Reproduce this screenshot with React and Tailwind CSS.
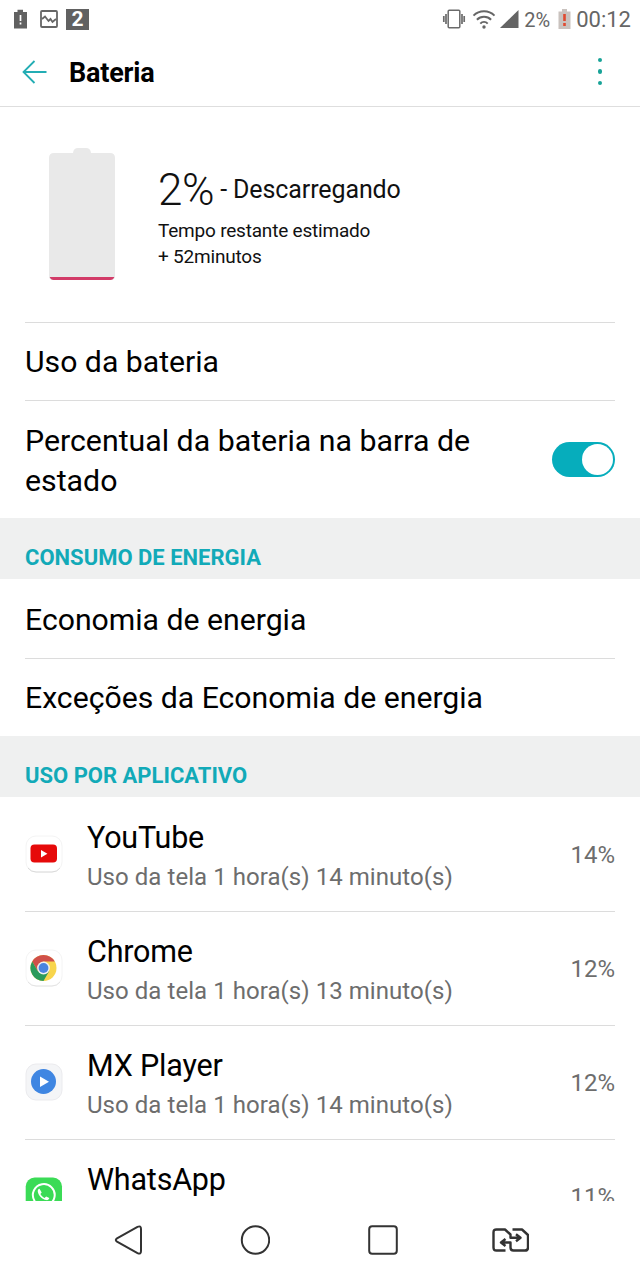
const APPS = [
  { name: "YouTube", usage: "Uso da tela 1 hora(s) 14 minuto(s)", percent: "14%", Icon: YouTubeIcon },
  { name: "Chrome", usage: "Uso da tela 1 hora(s) 13 minuto(s)", percent: "12%", Icon: ChromeIcon },
  { name: "MX Player", usage: "Uso da tela 1 hora(s) 14 minuto(s)", percent: "12%", Icon: MxPlayerIcon },
  { name: "WhatsApp", usage: "", percent: "11%", Icon: WhatsAppIcon },
];

function YouTubeIcon() {
  return (
    <svg viewBox="0 0 38 38" className="-mt-[2px] size-[38px]">
      <rect x="1" y="1" width="36" height="36" rx="10" fill="#fff" stroke="#f4f4f4" />
      <path d="M3 33q3 4 8 4h16q5 0 8-4" fill="none" stroke="#dadada" />
      <rect x="5.5" y="9.5" width="26.5" height="18" rx="4" fill="#e60a0a" />
      <path d="M16 15v7.4l6.4-3.7z" fill="#fff" />
    </svg>
  );
}

function ChromeIcon() {
  return (
    <svg viewBox="0 0 38 38" className="-mt-[2px] size-[38px]">
      <rect x="1" y="1" width="36" height="36" rx="10" fill="#fff" stroke="#f4f4f4" />
      <path d="M3 33q3 4 8 4h16q5 0 8-4" fill="none" stroke="#e4e4e4" />
      <g transform="translate(18.5 19)">
        <circle r="13" fill="#f8d54c" />
        <path d="M-11.26-6.5A13 13 0 0 1 11.26-6.5H0L-5.6 3.2z" fill="#d0504a" />
        <path d="M-11.26-6.5A13 13 0 0 0 0 13L5.6 3.2H-5.6z" fill="#2a9a5b" />
        <circle r="6.4" fill="#f1f1f1" />
        <circle r="4.9" fill="#4a84e0" />
      </g>
    </svg>
  );
}

function MxPlayerIcon() {
  return (
    <svg viewBox="0 0 38 38" className="-mt-[2px] size-[38px]">
      <rect x="1" y="1" width="36" height="36" rx="10" fill="#f4f5f7" stroke="#ebebee" />
      <circle cx="18.5" cy="18.5" r="12.5" fill="#3f86e2" />
      <path d="M15 13.5v10.4l9-5.2z" fill="#fff" />
    </svg>
  );
}

function WhatsAppIcon() {
  return (
    <svg viewBox="0 0 38 38" className="-mt-[2px] size-[38px]">
      <rect x=".7" y=".5" width="36.3" height="36.5" rx="9" fill="#3bdb56" />
      <path d="M7.5 29.2l1.900-5.700A10.900 10.900 0 1 1 13 27.200z" fill="none" stroke="#fff" strokeWidth="2" />
      <path
        d="M14.500 11.700c-1.200.2-2 1.500-1.700 3 .8 4 4.400 7.600 8.500 8.400 1.500.2 2.900-.7 3-2l-3.200-1.700-1.500 1.500c-1.900-.8-3.300-2.100-4.200-3.900l1.300-1.500z"
        fill="#fff"
      />
    </svg>
  );
}

function StatusBar() {
  return (
    <div className="flex h-10 items-center justify-between pr-[9px] pl-[13px] text-[#666]">
      <div className="flex items-center">
        <svg viewBox="0 0 15 20" className="-mt-[3px] h-5 w-[15px]">
          <path d="M1 3h3.500V.8h5.500V3H14v16.500H1z" fill="#616161" />
          <path d="M7.500 6v6M7.500 13.500v2" stroke="#fff" strokeWidth="1.700" />
        </svg>
        <svg viewBox="0 0 18 18" className="-mt-[3px] ml-3 size-[18px]">
          <rect x="1" y="1" width="16" height="16" rx="1" fill="none" stroke="#666" strokeWidth="1.800" />
          <path d="M2 9l3-2.500 3.500 4.500 2-2 2 3L16 9" fill="none" stroke="#666" strokeWidth="1.800" />
        </svg>
        <div className="-mt-[2px] ml-2 flex h-[21px] w-[23px] items-center justify-center bg-[#616161] text-[21px] leading-none font-bold text-white">
          2
        </div>
      </div>
      <div className="flex items-center">
        <svg viewBox="0 0 24 20" className="-mt-[2px] h-5 w-6" fill="none" stroke="#6b6b6b" strokeWidth="1.500">
          <rect x="6.200" y="1.200" width="11.600" height="17.600" rx="1" />
          <path d="M4 5v10M1.800 7v6M20 5v10M22.200 7v6" strokeWidth="1.700" />
        </svg>
        <svg viewBox="0 0 24 20" className="-mt-[2px] ml-[6px] h-5 w-6" fill="none" stroke="#666" strokeWidth="2">
          <path d="M1.500 6.600a15 15 0 0 1 21 0M4.900 10.700a10 10 0 0 1 14.200 0M8.300 14.600a5.300 5.300 0 0 1 7.400 0" />
          <circle cx="12" cy="18" r="1.700" fill="#666" stroke="none" />
        </svg>
        <svg viewBox="0 0 19 18" className="-mt-[2px] ml-1 h-[18px] w-[19px]">
          <path d="M0 18L18.500 0v18z" fill="#646464" />
        </svg>
        <span className="ml-[5px] text-[20px] leading-none">2%</span>
        <svg viewBox="0 0 13 20" className="-mt-[2px] ml-2 h-5 w-[13px]">
          <path d="M.5 2.500H4V0h5v2.500h3.500V20H.5z" fill="#c9c2be" />
          <path d="M6.500 5v7M6.500 14v3" stroke="#e04a30" strokeWidth="2.600" />
        </svg>
        <span className="-mt-px ml-[5px] text-[22px] leading-none">00:12</span>
      </div>
    </div>
  );
}

function Header() {
  return (
    <header className="flex h-[67px] items-center border-b border-[#dedede] pb-[3px] pl-[22px]">
      <svg viewBox="0 0 26 24" className="h-6 w-[26px]" fill="none" stroke="#23adb4" strokeWidth="1.800">
        <path d="M12.500 1L1.500 12l11 11M1.500 12H24.500" />
      </svg>
      <h1 className="ml-[21px] flex-1 pt-[3px] text-[27px] leading-none font-bold tracking-[-0.2px] text-black">
        Bateria
      </h1>
      <div className="mr-[38px] flex flex-col gap-[7px]">
        <span className="size-[4.5px] rounded-full bg-[#18a398]" />
        <span className="size-[4.5px] rounded-full bg-[#18a398]" />
        <span className="size-[4.5px] rounded-full bg-[#18a398]" />
      </div>
    </header>
  );
}

function BatterySummary() {
  return (
    <section className="mx-[25px] flex h-[216px] border-b border-[#dcdcdc] pl-6">
      <svg viewBox="0 0 66 134" className="mt-[40px] h-[134px] w-[66px]">
        <path d="M24 6Q24.500 1 29 1h8q4.500 0 5 5h19q5 0 5 5v118q0 4-4 4H4q-4 0-4-4V11q0-5 5-5z" fill="#e9e9e9" />
        <path d="M.7 130h64.600q-1 3-4 3H4.700q-3 0-4-3z" fill="#d23b68" />
      </svg>
      <div className="ml-[43px] pt-[58px] text-[#111]">
        <div className="flex items-center leading-[50px]">
          <span className="text-[44px] font-light tracking-[-0.4px]">2%</span>
          <span className="ml-[6px] text-[25px] tracking-[-0.1px]">- Descarregando</span>
        </div>
        <p className="mt-[3px] text-[19px] leading-[26px] tracking-[-0.2px]">
          Tempo restante estimado
          <br />+ 52minutos
        </p>
      </div>
    </section>
  );
}

function SectionTitle({ children }) {
  return (
    <h2 className="flex h-[61px] items-end bg-[#eff0f0] px-[25px] pb-[7px] text-[22px] leading-[28px] font-bold text-[#12aab8]">
      {children}
    </h2>
  );
}

function Toggle() {
  return (
    <button className="-mt-[3px] flex h-[35px] w-[63px] items-center justify-end rounded-full bg-[#06adbc] pr-[2px]">
      <span className="size-[31px] rounded-full bg-white" />
    </button>
  );
}

function AppRow({ app }) {
  const { name, usage, percent, Icon } = app;
  return (
    <li className="mx-[25px] flex h-[114px] items-center border-b border-[#dcdcdc]">
      <Icon />
      <div className="ml-6 h-full flex-1 pt-5">
        <div className="text-[30.5px] leading-[40px] tracking-[-0.2px] text-black">{name}</div>
        <div className="text-[24px] leading-[38px] tracking-[0.05px] text-[#6d6d6d]">{usage}</div>
      </div>
      <span className="text-[24px] text-[#6d6d6d]">{percent}</span>
    </li>
  );
}

function NavBar() {
  return (
    <nav className="flex h-[79px] items-center bg-white pb-px pl-[114px]">
      <svg viewBox="0 0 28 30" className="h-[30px] w-7" fill="none" stroke="#333" strokeWidth="2">
        <path d="M23.500 1.900Q27 .2 27 4v22q0 3.800-3.500 2.100L3 16.600q-2.400-1.600 0-3.200z" />
      </svg>
      <svg viewBox="0 0 30 30" className="ml-[98px] size-[30px]" fill="none" stroke="#333" strokeWidth="2">
        <circle cx="15.5" cy="15" r="13.7" />
      </svg>
      <svg viewBox="0 0 30 30" className="ml-[98px] size-[30px]" fill="none" stroke="#333" strokeWidth="2">
        <rect x="1.2" y="1.2" width="27.600" height="27.600" rx="3" />
      </svg>
      <svg
        viewBox="0 0 37 24"
        className="ml-[94px] h-6 w-[37px]"
        fill="none"
        stroke="#333"
        strokeWidth="2.4"
        strokeLinejoin="round"
      >
        <path d="M13.500 22.500h-9q-3 0-3-3V4.500q0-3 3-3H13l5.500 5v3.300h8.500M24 6.300l4.500 3.500-4.500 3.500" />
        <path d="M20.500 1.500h9.500l6 5.500v12.500q0 3-3 3H21.500q-3 0-3-3v-5H10M13.500 11L9 14.500l4.500 3.500" />
      </svg>
    </nav>
  );
}

export default function App() {
  return (
    <div className="flex h-[1280px] w-[640px] flex-col overflow-hidden bg-white font-['Roboto','Noto_Sans',sans-serif]">
      <StatusBar />
      <Header />
      <main className="h-[1094px] overflow-hidden">
        <BatterySummary />
        <div className="mx-[25px] flex h-[78px] items-center border-b border-[#dcdcdc] text-[30.2px] text-black">
          Uso da bateria
        </div>
        <div className="flex h-[117px] items-center justify-between px-[25px] pt-[2px]">
          <span className="w-[470px] text-[30.3px] leading-[40px] text-black">
            Percentual da bateria na barra de estado
          </span>
          <Toggle />
        </div>
        <SectionTitle>CONSUMO DE ENERGIA</SectionTitle>
        <div className="mx-[25px] flex h-[80px] items-center border-b border-[#dcdcdc] pt-[2px] text-[30.2px] text-black">
          Economia de energia
        </div>
        <div className="mx-[25px] flex h-[77px] items-center text-[30.2px] text-black">
          Exceções da Economia de energia
        </div>
        <SectionTitle>USO POR APLICATIVO</SectionTitle>
        <ul className="pt-px">
          {APPS.map((app) => (
            <AppRow key={app.name} app={app} />
          ))}
        </ul>
      </main>
      <NavBar />
    </div>
  );
}
